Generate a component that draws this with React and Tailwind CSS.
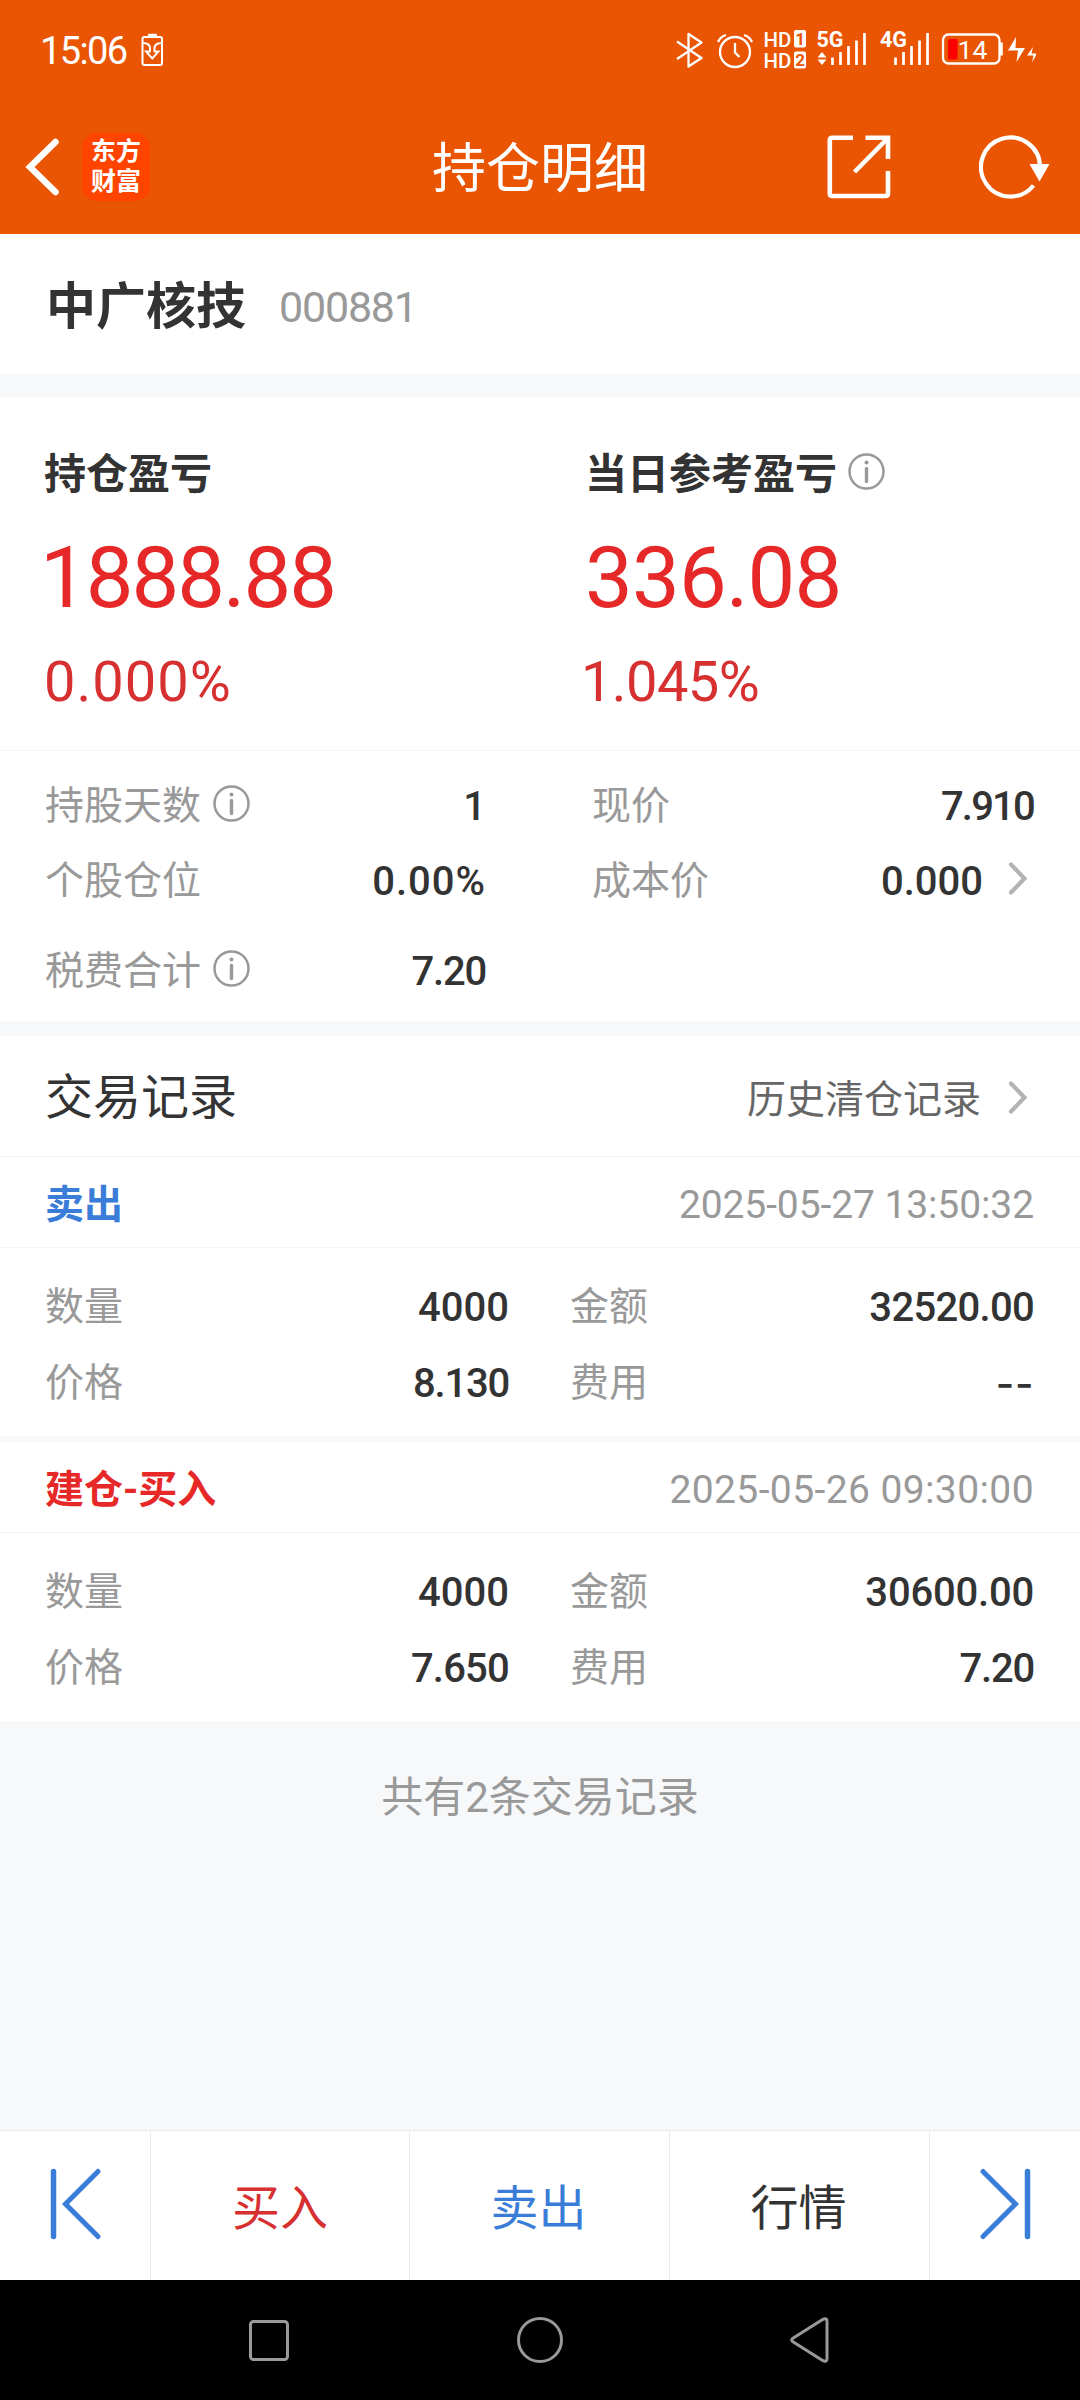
import clsx from "clsx";

const FONT = "font-[Roboto,'Noto_Sans_CJK_SC',sans-serif]";

const RECORDS = [
  {
    type: "卖出",
    color: "text-[#3a7dd8]",
    time: "2025-05-27 13:50:32",
    timeClass: "-tracking-[0.1px]",
    amount: "4000",
    price: "8.130",
    priceClass: "tracking-[-1.2px]",
    total: "32520.00",
    totalClass: "tracking-[-0.7px]",
    fee: "--",
    feeClass: "font-[Inter] tracking-[0.6px]",
  },
  {
    type: "建仓-买入",
    color: "text-[#e62828]",
    time: "2025-05-26 09:30:00",
    timeClass: "tracking-[0.4px]",
    amount: "4000",
    price: "7.650",
    priceClass: "tracking-[-0.8px]",
    total: "30600.00",
    totalClass: "tracking-[-0.2px]",
    fee: "7.20",
    feeClass: "tracking-[-1.2px]",
  },
];

// =========================================
// ICONS
// =========================================

function InfoIcon({ className }) {
  return (
    <svg
      className={clsx("h-[37px] w-[37px] shrink-0", className)}
      viewBox="0 0 37 37"
      fill="none"
      stroke="#999"
    >
      <circle cx="18.5" cy="18.5" r="17" strokeWidth="2.5" />
      <path d="M18.5 15.5V28.5" strokeWidth="3.4" strokeLinecap="round" />
      <circle cx="18.5" cy="9.5" r="2" fill="#999" stroke="none" />
    </svg>
  );
}

function ChevronIcon() {
  return (
    <svg
      className="h-[34px] w-[20px] shrink-0"
      viewBox="0 0 20 34"
      fill="none"
      stroke="#b3b3b3"
      strokeWidth="4.2"
      strokeLinecap="round"
    >
      <path d="M3 2.5L16.500 16.500L3 30.500" />
    </svg>
  );
}

function BatterySaverIcon() {
  return (
    <svg className="h-[34px] w-[23px]" viewBox="0 0 23 34" fill="none" stroke="#fff">
      <rect x="1.5" y="4" width="19.5" height="28" rx="2" strokeWidth="2" />
      <path d="M7 0.8H16V3.5H7Z" fill="#fff" stroke="none" />
      <path
        d="M2 10Q9 10 9 15.500V18.500H5L11.300 25.500L17.500 18.500H13.500V15.500Q13.500 10 21 10"
        strokeWidth="1.900"
      />
    </svg>
  );
}

function StatusIcons() {
  return (
    <svg
      className="h-[44px] w-[364px]"
      viewBox="672 28 364 44"
      fill="none"
      stroke="#fff"
    >
      {/* BLUETOOTH */}
      <path
        d="M677 41.500L701.500 58L688.500 66.500V34L701.500 42.500L677 59"
        strokeWidth="2.300"
        strokeLinejoin="round"
      />

      {/* ALARM */}
      <circle cx="735" cy="52" r="15" strokeWidth="2.300" />
      <path d="M735 43V52.500L739.500 57" strokeWidth="2.300" />
      <path d="M718 42Q720 37 726 35M752 42Q750 37 744 35" strokeWidth="2.300" />

      {/* HD */}
      <g
        stroke="none"
        fill="#fff"
        fontFamily="Roboto, sans-serif"
        fontSize="20.500"
        fontWeight="500"
      >
        <text x="763.500" y="47">
          HD
        </text>
        <text x="763.500" y="68">
          HD
        </text>
        <rect x="794" y="30" width="12" height="17.500" rx="2" />
        <rect x="794" y="51.500" width="12" height="17" rx="2" />
        <g fill="#e95502" fontSize="17" fontWeight="700">
          <text x="795.200" y="45">
            1
          </text>
          <text x="795.200" y="66.200">
            2
          </text>
        </g>
      </g>

      {/* SIGNAL */}
      <g
        stroke="none"
        fill="#fff"
        fontFamily="Roboto, sans-serif"
        fontSize="21.500"
        fontWeight="700"
      >
        <text x="816.500" y="47">
          5G
        </text>
        <text x="880" y="47">
          4G
        </text>
        <path d="M822 52L826.500 57.500H817.500ZM822 65L826.500 59.500H817.500Z" />
      </g>
      <path
        d="M832.500 65V57.500M840.500 65V52M848.500 65V46M856.500 65V40.500M864.500 65V33"
        strokeWidth="2.700"
      />
      <path
        d="M895.500 65V57.500M903.500 65V52M911.500 65V46M919.500 65V40.500M927.500 65V33"
        strokeWidth="2.700"
      />

      {/* BATTERY */}
      <rect x="943" y="34.500" width="56.500" height="29" rx="5.500" strokeWidth="2.300" />
      <path d="M1001 42.500V55.500" strokeWidth="3.500" />
      <rect x="948" y="39" width="9.500" height="20.500" rx="1.500" fill="#f00" stroke="none" />
      <text
        x="957.500"
        y="59"
        stroke="none"
        fill="#fff"
        fontFamily="Roboto, sans-serif"
        fontSize="26.500"
      >
        14
      </text>
      <path
        d="M1016 37L1008 50.500H1018L1016.500 62L1025 48H1015.500ZM1033 47L1027 55.500H1033.500L1032 62.500L1037 53.500H1031.500Z"
        fill="#fff"
        stroke="none"
      />
    </svg>
  );
}

function ShareIcon() {
  return (
    <svg
      className="h-[64px] w-[64px]"
      viewBox="0 0 64 64"
      fill="none"
      stroke="#fff"
      strokeWidth="4.600"
    >
      <path d="M26 2.800H5.300Q2.800 2.800 2.800 5.300V58.500Q2.800 61 5.300 61H58.500Q61 61 61 58.500V36" />
      <path d="M38.500 2.800H61V24" />
      <path d="M27.500 37L60 4" />
    </svg>
  );
}

function RefreshIcon() {
  return (
    <svg className="h-[64px] w-[72px]" viewBox="0 0 72 64" fill="none" stroke="#fff">
      <path d="M61 32A29.500 29.500 0 1 0 54.500 50.500" strokeWidth="4.200" />
      <path d="M50.500 29H70.500L60.500 46.500Z" fill="#fff" stroke="none" />
    </svg>
  );
}

function SkipIcon({ className }) {
  return (
    <svg
      className={clsx("h-[72px] w-[52px]", className)}
      viewBox="0 0 52 72"
      fill="none"
      stroke="#3a7dd8"
      strokeWidth="5.500"
      strokeLinecap="round"
    >
      <path d="M4.500 3.500V68.500" />
      <path d="M49 3.500L16.500 36L49 68.500" strokeWidth="5" />
    </svg>
  );
}

// =========================================
// ROWS
// =========================================

function Field({ label, value, info, arrow, className, valueClass }) {
  return (
    <div className={clsx("flex h-[60px] items-center", className)}>
      <span className="pt-px text-[39px] leading-[60px] text-[#999]">
        {label}
      </span>
      {info && <InfoIcon className="mb-[3px] ml-3" />}
      <span
        className={clsx(
          "ml-auto pt-[3px] text-[40px] leading-[60px] font-medium text-[#333]",
          valueClass,
        )}
      >
        {value}
      </span>
      {arrow && (
        <span className="mr-[6px] mb-[3px] ml-[25px] flex">
          <ChevronIcon />
        </span>
      )}
    </div>
  );
}

function Record({ record }) {
  return (
    <div className="bg-white">
      <div className="flex h-[91px] items-center justify-between border-b border-[#f3f4f6] pt-[5px] pr-[46px] pl-[45px]">
        <span
          className={clsx("text-[39px] leading-[60px] font-bold", record.color)}
        >
          {record.type}
        </span>
        <span
          className={clsx(
            "text-[39px] leading-[60px] text-[#999]",
            record.timeClass,
          )}
        >
          {record.time}
        </span>
      </div>

      <div className="grid h-[188px] grid-cols-[464px_464px] content-start gap-x-[61px] gap-y-4 pt-7 pl-[45px]">
        <Field label="数量" value={record.amount} />
        <Field
          label="金额"
          value={record.total}
          valueClass={record.totalClass}
        />
        <Field
          label="价格"
          value={record.price}
          valueClass={record.priceClass}
        />
        <Field label="费用" value={record.fee} valueClass={record.feeClass} />
      </div>
    </div>
  );
}

function Profit({ title, amount, percent, info, amountClass, percentClass }) {
  return (
    <div className="flex flex-col">
      <div className="flex h-[60px] items-center">
        <span className="pt-1 text-[42px] leading-[60px] font-bold text-[#333]">
          {title}
        </span>
        {info && <InfoIcon className="mb-[3px] ml-[11px]" />}
      </div>
      <span
        className={clsx(
          "mt-[27px] text-[85px] leading-[96px] text-[#e62828]",
          amountClass,
        )}
      >
        {amount}
      </span>
      <span
        className={clsx(
          "mt-[26px] text-[56px] leading-[60px] text-[#d63031]",
          percentClass,
        )}
      >
        {percent}
      </span>
    </div>
  );
}

function App() {
  return (
    <div className={clsx("flex h-[2400px] w-[1080px] flex-col bg-[#f7f8fa]", FONT)}>
      {/* HEADER */}
      <header className="h-[234px] bg-[#e95502] text-white">
        <div className="flex h-[100px] items-center pr-[44px] pl-[40px]">
          <span className="pt-0.5 text-[38px] leading-[50px] tracking-[-1.6px]">
            15:06
          </span>
          <span className="ml-3.5">
            <BatterySaverIcon />
          </span>
          <span className="ml-auto">
            <StatusIcons />
          </span>
        </div>

        <div className="grid h-[134px] grid-cols-[1fr_auto_1fr] items-center">
          <div className="flex items-center pl-[25px]">
            <svg
              className="h-[58px] w-[34px]"
              viewBox="0 0 34 58"
              fill="none"
              stroke="#fff"
              strokeWidth="6.500"
              strokeLinecap="round"
            >
              <path d="M30.500 4L5 29L30.500 54" />
            </svg>
            <div className="ml-[23px] flex h-[68px] w-[68px] flex-col items-center justify-center rounded-[15px] bg-[#ff4400] pb-px text-[25px] leading-[30px] font-bold">
              <span>东方</span>
              <span>财富</span>
            </div>
          </div>
          <h1 className="pt-1.5 text-[54px] leading-[80px]">持仓明细</h1>
          <div className="flex items-center justify-end gap-[88px] pr-[29px]">
            <ShareIcon />
            <RefreshIcon />
          </div>
        </div>
      </header>

      {/* STOCK */}
      <div className="flex h-[140px] items-center bg-white pt-[5px] pl-[46px]">
        <span className="text-[50px] leading-[70px] font-bold text-[#333]">
          中广核技
        </span>
        <span className="ml-[33px] text-[43px] leading-[70px] tracking-[-1.2px] text-[#999]">
          000881
        </span>
      </div>

      {/* PROFIT */}
      <section className="mt-6 bg-white">
        <div className="grid h-[353px] grid-cols-[541px_1fr] border-b border-[#f3f4f6] pt-[45px] pl-[44px]">
          <Profit
            title="持仓盈亏"
            amount="1888.88"
            percent="0.000%"
            amountClass="-ml-1 tracking-[-2px]"
            percentClass="tracking-[1px]"
          />
          <Profit
            title="当日参考盈亏"
            amount="336.08"
            percent="1.045%"
            amountClass="tracking-[-0.8px]"
            percentClass="-ml-1 tracking-[-0.6px]"
            info
          />
        </div>

        <div className="grid h-[270px] grid-cols-[441px_442px] content-start gap-x-[106px] pt-6 pl-[45px]">
          <Field label="持股天数" value="1" info />
          <Field label="现价" value="7.910" valueClass="tracking-[-1.8px]" />
          <Field
            label="个股仓位"
            value="0.00%"
            className="mt-[15px]"
            valueClass="tracking-[1px]"
          />
          <Field label="成本价" value="0.000" className="mt-[15px]" arrow />
          <Field
            label="税费合计"
            value="7.20"
            className="mt-[30px]"
            valueClass="tracking-[-1.2px]"
            info
          />
        </div>
      </section>

      {/* RECORDS */}
      <section className="mt-[15px]">
        <div className="flex h-[121px] items-center border-b border-[#f3f4f6] bg-white pr-[52px] pl-[45px]">
          <h2 className="pt-[3px] text-[48px] leading-[70px] text-[#333]">
            交易记录
          </h2>
          <span className="mr-[27px] ml-auto pt-[7px] text-[39px] leading-[60px] text-[#666]">
            历史清仓记录
          </span>
          <span className="flex pt-[3px]">
            <ChevronIcon />
          </span>
        </div>

        <div className="flex flex-col gap-1.5">
          {RECORDS.map((record) => (
            <Record key={record.time} record={record} />
          ))}
        </div>

        <p className="pt-[47px] text-center text-[42px] leading-[60px] text-[#999]">
          共有2条交易记录
        </p>
      </section>

      {/* ACTIONS */}
      <div className="mt-auto grid h-[150px] grid-cols-[151px_259px_260px_260px_150px] border-t border-[#e9ebee] bg-white text-[48px] leading-[70px]">
        <button className="flex items-center justify-center border-r border-[#e9ebee] pb-1">
          <SkipIcon />
        </button>
        <button className="border-r border-[#e9ebee] pt-1.5 text-[#d63031]">
          买入
        </button>
        <button className="border-r border-[#e9ebee] pt-1.5 pr-0.5 text-[#3a7dd8]">
          卖出
        </button>
        <button className="border-r border-[#e9ebee] pt-1.5 pr-0.5 text-[#333]">
          行情
        </button>
        <button className="flex items-center justify-center pb-1 pl-0.5">
          <SkipIcon className="-scale-x-100" />
        </button>
      </div>

      {/* SYSTEM NAV */}
      <nav className="flex h-[120px] items-center justify-center gap-[225px] bg-black pr-[3px]">
        <svg className="h-[48px] w-[44px]" viewBox="0 0 44 48" fill="none" stroke="#999" strokeWidth="3">
          <rect x="3.500" y="5.500" width="37" height="38" rx="3" />
        </svg>
        <svg className="h-[48px] w-[48px]" viewBox="0 0 48 48" fill="none" stroke="#999" strokeWidth="3">
          <circle cx="24" cy="24" r="21.500" />
        </svg>
        <svg
          className="h-[48px] w-[42px]"
          viewBox="0 0 42 48"
          fill="none"
          stroke="#999"
          strokeWidth="3"
          strokeLinejoin="round"
        >
          <path d="M3.500 22.500L34 3.300Q38 1.500 38 5V43Q38 46.500 34 44.700L3.500 25.500Q2 24 3.500 22.500Z" />
        </svg>
      </nav>
    </div>
  );
}

export default App;
